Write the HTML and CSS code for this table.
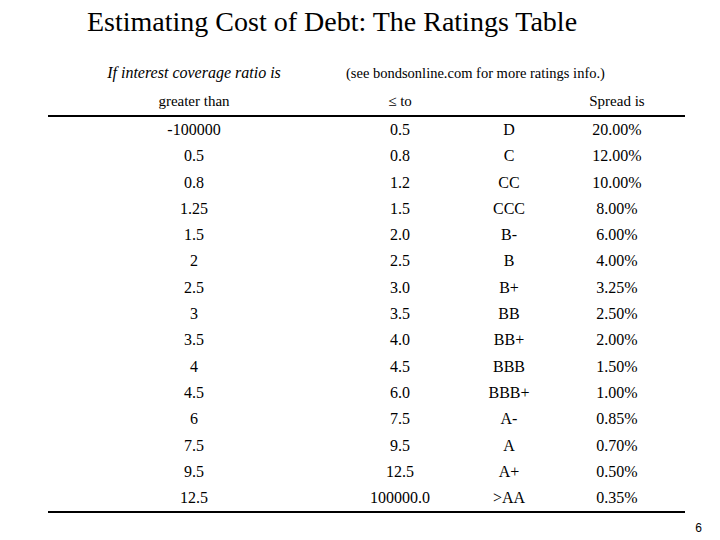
FILE: index.html
```html
<!DOCTYPE html>
<html lang="en">
<head>
<meta charset="utf-8">
<title>Estimating Cost of Debt: The Ratings Table</title>
<link rel="stylesheet" href="styles.css">
</head>
<body>
<div class="slide">
  <h1 class="title">Estimating Cost of Debt: The Ratings Table</h1>
  <div class="sub-row">
    <div class="sub-left">If interest coverage ratio is</div>
    <div class="sub-right">(see bondsonline.com for more ratings info.)</div>
  </div>
  <div class="table">
    <div class="row head">
      <div>greater than</div><div>&le; to</div><div></div><div>Spread is</div>
    </div>
    <div class="body">
      <div class="row"><div>-100000</div><div>0.5</div><div>D</div><div>20.00%</div></div>
      <div class="row"><div>0.5</div><div>0.8</div><div>C</div><div>12.00%</div></div>
      <div class="row"><div>0.8</div><div>1.2</div><div>CC</div><div>10.00%</div></div>
      <div class="row"><div>1.25</div><div>1.5</div><div>CCC</div><div>8.00%</div></div>
      <div class="row"><div>1.5</div><div>2.0</div><div>B-</div><div>6.00%</div></div>
      <div class="row"><div>2</div><div>2.5</div><div>B</div><div>4.00%</div></div>
      <div class="row"><div>2.5</div><div>3.0</div><div>B+</div><div>3.25%</div></div>
      <div class="row"><div>3</div><div>3.5</div><div>BB</div><div>2.50%</div></div>
      <div class="row"><div>3.5</div><div>4.0</div><div>BB+</div><div>2.00%</div></div>
      <div class="row"><div>4</div><div>4.5</div><div>BBB</div><div>1.50%</div></div>
      <div class="row"><div>4.5</div><div>6.0</div><div>BBB+</div><div>1.00%</div></div>
      <div class="row"><div>6</div><div>7.5</div><div>A-</div><div>0.85%</div></div>
      <div class="row"><div>7.5</div><div>9.5</div><div>A</div><div>0.70%</div></div>
      <div class="row"><div>9.5</div><div>12.5</div><div>A+</div><div>0.50%</div></div>
      <div class="row"><div>12.5</div><div>100000.0</div><div>&gt;AA</div><div>0.35%</div></div>
    </div>
  </div>
  <div class="page-num">6</div>
</div>
</body>
</html>
```

FILE: styles.css
```css
html, body {
  margin: 0;
  padding: 0;
  background: #ffffff;
}

.slide {
  width: 720px;
  height: 540px;
  color: #000000;
  font-family: "Liberation Serif", "DejaVu Serif", serif;
  overflow: hidden;
}

.title {
  margin: 6px 0 0 87px;
  font-size: 28px;
  font-weight: normal;
  line-height: 32px;
  height: 32px;
  white-space: nowrap;
}

.sub-row {
  display: flex;
  margin: 25px 0 0 48px;
  height: 20px;
  line-height: 20px;
}

.sub-left {
  width: 292px;
  text-align: center;
  font-style: italic;
  font-size: 16px;
}

.sub-right {
  margin-left: 6px;
  font-size: 14.5px;
}

.table {
  margin: 8px 0 0 48px;
  width: 637px;
}

.row {
  display: grid;
  grid-template-columns: 292px 120px 98px 118px;
  text-align: center;
  font-size: 16px;
  height: 26.3px;
  line-height: 26.3px;
}

.row.head {
  font-size: 15px;
  height: 20px;
  line-height: 20px;
  padding-bottom: 4px;
  border-bottom: 2px solid #000000;
}

.body {
  border-bottom: 2px solid #000000;
}

.page-num {
  margin-top: 8px;
  padding-right: 18px;
  text-align: right;
  font-family: "Liberation Sans", sans-serif;
  font-size: 12px;
  line-height: 14px;
}
```
